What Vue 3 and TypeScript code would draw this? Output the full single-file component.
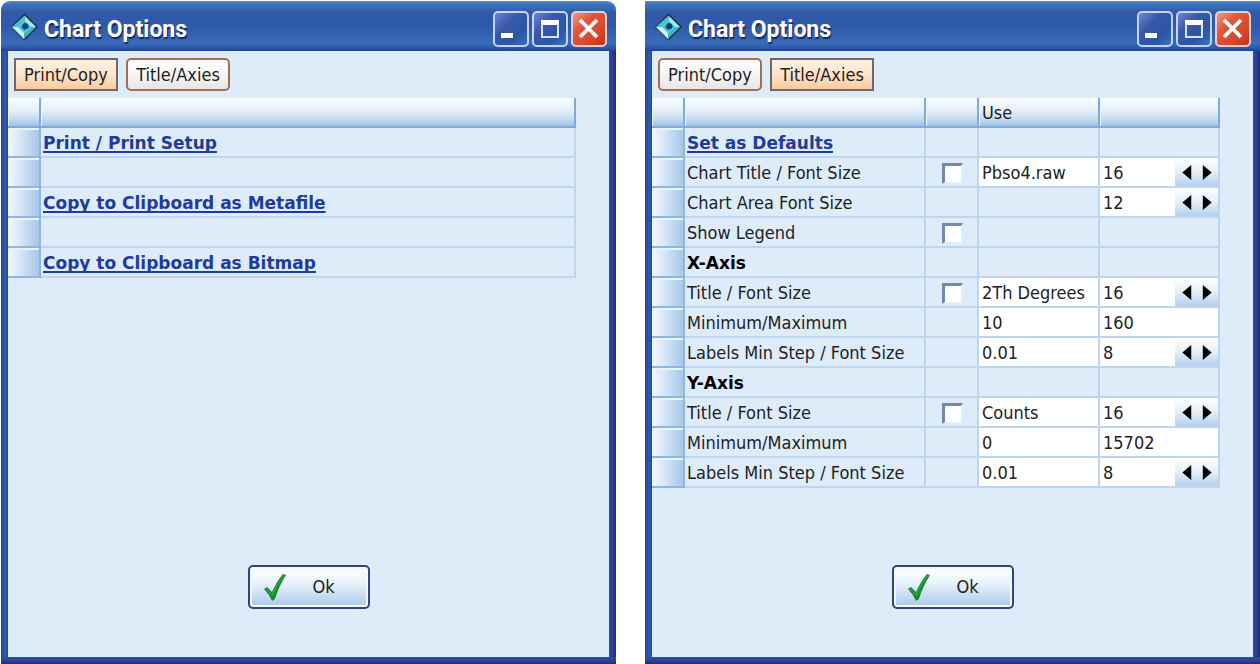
<script setup lang="ts">
import { ref, reactive } from 'vue'

interface OptionRow {
  id: string
  label: string
  kind?: 'link' | 'heading'
  check?: boolean
  use?: string
  value?: string
  spin?: boolean
}

const tabs = ['Print/Copy', 'Title/Axies']

const actions = ['Print / Print Setup', '', 'Copy to Clipboard as Metafile', '', 'Copy to Clipboard as Bitmap']

const rows = reactive<OptionRow[]>([
  { id: 'defaults', label: 'Set as Defaults', kind: 'link' },
  { id: 'chart-title', label: 'Chart Title / Font Size', check: false, use: 'Pbso4.raw', value: '16', spin: true },
  { id: 'chart-area', label: 'Chart Area Font Size', value: '12', spin: true },
  { id: 'legend', label: 'Show Legend', check: false },
  { id: 'x-axis', label: 'X-Axis', kind: 'heading' },
  { id: 'x-title', label: 'Title / Font Size', check: false, use: '2Th Degrees', value: '16', spin: true },
  { id: 'x-range', label: 'Minimum/Maximum', use: '10', value: '160' },
  { id: 'x-step', label: 'Labels Min Step / Font Size', use: '0.01', value: '8', spin: true },
  { id: 'y-axis', label: 'Y-Axis', kind: 'heading' },
  { id: 'y-title', label: 'Title / Font Size', check: false, use: 'Counts', value: '16', spin: true },
  { id: 'y-range', label: 'Minimum/Maximum', use: '0', value: '15702' },
  { id: 'y-step', label: 'Labels Min Step / Font Size', use: '0.01', value: '8', spin: true },
])

const windows = ref([{ active: 0 }, { active: 1 }])

function step(row: OptionRow, by: number) {
  row.value = String(Number(row.value) + by)
}
</script>

<template>
  <main class="desktop">
    <section v-for="(win, w) in windows" :key="w" class="window" :class="{ rounded: w === 0 }" aria-label="Chart Options">
      <header class="titlebar">
        <svg class="logo" viewBox="0 0 28 28" aria-hidden="true">
          <path d="M14 0 28 14 14 28 0 14Z" fill="#12313f" />
          <path d="M14 2 14 8 8 14 1 14Z" fill="#4fc0ce" />
          <path d="M14 2 26 14 20 14 14 8Z" fill="#a5e8ee" />
          <path d="M1 14 8 14 14 20 14 27Z" fill="#c9f6f8" />
          <path d="M26 14 20 14 14 20 14 26Z" fill="#38b6cc" />
          <path d="M14 7 21 14 14 21 7 14Z" fill="#5cc8da" />
          <path d="M14 9 19 14 14 18 10 14Z" fill="#1b7fb0" />
          <circle cx="15" cy="13" r="3" fill="#0b3f7a" />
        </svg>
        <h1>Chart Options</h1>
        <div class="controls">
          <button type="button" class="ctl" aria-label="Minimize">
            <svg viewBox="0 0 32 32"><rect x="6" y="20" width="12" height="5" fill="#fff" /></svg>
          </button>
          <button type="button" class="ctl" aria-label="Maximize">
            <svg viewBox="0 0 32 32">
              <rect x="8" y="8" width="16" height="16" fill="none" stroke="#d5e2fa" stroke-width="2" />
              <rect x="7" y="7" width="18" height="5" fill="#fff" />
            </svg>
          </button>
          <button type="button" class="ctl close" aria-label="Close">
            <svg viewBox="0 0 32 32"><path d="M7 7 24 24M24 7 7 24" stroke="#fff" stroke-width="3.8" /></svg>
          </button>
        </div>
      </header>

      <div class="client">
        <nav class="tabs" role="tablist">
          <button
            v-for="(tab, t) in tabs"
            :key="tab"
            type="button"
            role="tab"
            class="tab"
            :class="{ active: win.active === t }"
            :aria-selected="win.active === t"
            @click="win.active = t"
          >{{ tab }}</button>
        </nav>

        <div class="sheet">
          <table v-if="win.active === 0">
            <colgroup><col class="c-mark" /><col /></colgroup>
            <thead><tr><th></th><th></th></tr></thead>
            <tbody>
              <tr v-for="(action, i) in actions" :key="i">
                <td class="mark"></td>
                <td><a v-if="action" href="#">{{ action }}</a></td>
              </tr>
            </tbody>
          </table>

          <table v-else>
            <colgroup><col class="c-mark" /><col /><col class="c-check" /><col class="c-use" /><col class="c-value" /></colgroup>
            <thead><tr><th></th><th></th><th></th><th class="use">Use</th><th></th></tr></thead>
            <tbody>
              <tr v-for="row in rows" :key="row.id">
                <td class="mark"></td>
                <td>
                  <a v-if="row.kind === 'link'" href="#">{{ row.label }}</a>
                  <strong v-else-if="row.kind === 'heading'">{{ row.label }}</strong>
                  <label v-else :for="row.value ? row.id + '-value' : row.id + '-check'">{{ row.label }}</label>
                </td>
                <td class="check">
                  <input v-if="row.check !== undefined" :id="row.id + '-check'" v-model="row.check" type="checkbox" :aria-label="'Use ' + row.label" />
                </td>
                <td :class="{ field: row.use !== undefined }">
                  <input v-if="row.use !== undefined" v-model="row.use" type="text" :aria-label="row.label" />
                </td>
                <td :class="{ field: row.value !== undefined }">
                  <div v-if="row.value !== undefined" class="value">
                    <input :id="row.id + '-value'" v-model="row.value" type="text" />
                    <div v-if="row.spin" class="spin">
                      <button type="button" aria-label="Decrease" @click="step(row, -1)">
                        <svg viewBox="0 0 10 16"><path d="M9.500 0V16L0 8Z" /></svg>
                      </button>
                      <button type="button" aria-label="Increase" @click="step(row, 1)">
                        <svg viewBox="0 0 10 16"><path d="M.5 0V16L10 8Z" /></svg>
                      </button>
                    </div>
                  </div>
                </td>
              </tr>
            </tbody>
          </table>
        </div>

        <footer>
          <button type="button" class="ok">
            <svg viewBox="0 0 24 28" aria-hidden="true">
              <path d="M1 16 4 14 9 19Q14 8 20 1L23 2Q16 13 12 26L9 28Q6 21 1 16Z" fill="#178a35" />
              <path d="M3 16 9 22Q14 11 21 2" fill="none" stroke="#3db54a" stroke-width="1" />
            </svg>
            <span>Ok</span>
          </button>
        </footer>
      </div>
    </section>
  </main>
</template>

<style>
body {
  margin: 0;
  background: #fff;
}
</style>

<style scoped>
* {
  box-sizing: border-box;
}

.desktop {
  display: grid;
  grid-template-columns: 1fr 1fr;
  gap: 29px;
  min-height: 100vh;
  padding: 1px 0 0 1px;
  font-family: "DejaVu Sans Condensed", "DejaVu Sans", "Noto Sans", sans-serif;
  font-size: 18px;
  line-height: 24px;
  color: #222;
}

button,
input {
  font: inherit;
  color: inherit;
  margin: 0;
  padding: 0;
}

.window {
  display: flex;
  flex-direction: column;
  min-width: 0;
  padding: 0 7px 7px;
  background:
    linear-gradient(180deg, #4a8cca 0, #3a72ba 4px, #3059a8 12px, #2f5aaa 26px, #3a6cb8 42px, #2d58a8 47px, #1f3f92 50px, transparent 50px),
    linear-gradient(0deg, #2a2478 0, #27419a 3px, #2a52a8 7px, transparent 7px),
    linear-gradient(90deg, #2547a0 0, #2c5cb0 5px, #20449c 7px, #2a52a8 50%, #2550a8 calc(100% - 7px), #2a3a96 calc(100% - 3px), #2a2478 100%);
}

.rounded {
  border-radius: 9px 9px 0 0;
}

.titlebar {
  display: flex;
  align-items: center;
  height: 50px;
  padding: 6px 2px 0 3px;
}

.logo {
  width: 27px;
  height: 28px;
  margin-bottom: 4px;
}

h1 {
  flex: 1;
  margin: 0 0 0 6px;
  padding-top: 2px;
  font-family: Roboto, "Noto Sans", sans-serif;
  font-size: 23px;
  font-weight: 700;
  line-height: 28px;
  color: #fff;
  text-shadow: 1px 2px 1px #14256b;
}

.controls {
  display: flex;
  gap: 3px;
}

.ctl {
  width: 36px;
  height: 36px;
  border: 2px solid #c3d3f2;
  border-radius: 5px;
  background: linear-gradient(135deg, #7184cf 0, #3a58ac 35%, #2b55a8 70%, #3a72be 100%);
}

.ctl svg {
  display: block;
  width: 32px;
  height: 32px;
}

.close {
  border-color: #e9cfd2;
  background: linear-gradient(135deg, #ee9b87 0, #e0563a 35%, #d9472a 70%, #c0301a 100%);
}

.client {
  display: flex;
  flex: 1;
  flex-direction: column;
  background: #deecf9;
}

.tabs {
  display: flex;
  gap: 8px;
  padding: 7px 6px;
}

.tab {
  width: 104px;
  height: 33px;
  border: 2px solid #a0714f;
  border-radius: 5px;
  background: linear-gradient(#fff, #f4f3f3 60%, #e6e4e6);
}

.tab.active {
  border-color: #70696a;
  border-radius: 0;
  background: linear-gradient(#fff3e6, #fde3cb 50%, #fbcb9c);
}

.sheet {
  padding-right: 33px;
}

table {
  width: 100%;
  table-layout: fixed;
  border-spacing: 0;
}

.c-mark { width: 33px; }
.c-check { width: 53px; }
.c-use { width: 121px; }
.c-value { width: 120px; }

th,
td {
  height: 30px;
  padding: 2px 0 0 2px;
  border-right: 2px solid #bdd5ef;
  border-bottom: 2px solid #bdd5ef;
  text-align: left;
  white-space: nowrap;
  font-weight: 400;
}

th {
  border-color: #7ea9da;
  background: linear-gradient(#fbfdff, #e3f0f9 45%, #c5dbf0 75%, #9fc1e5);
  box-shadow: inset 1px 0 #edf6fd;
}

.use {
  padding-left: 3px;
}

.mark {
  border-color: #8fb6e2;
  background: linear-gradient(90deg, #f1f8fe 0, #dbe9f7 35%, #a6c6e9 100%);
  box-shadow: inset 0 2px #e9f4fd;
}

a,
strong {
  font-family: "DejaVu Sans", Verdana, sans-serif;
  font-size: 17px;
  font-weight: 700;
}

a {
  color: #1f3b9b;
  text-decoration-thickness: 2px;
  text-underline-offset: 2px;
  text-decoration-skip-ink: none;
}

strong {
  color: #000;
}

.check {
  padding: 2px 0 0 2px;
  text-align: center;
}

input[type="checkbox"] {
  display: block;
  width: 21px;
  height: 21px;
  margin: 0 auto;
  appearance: none;
  border: solid;
  border-width: 3px 2px 2px 3px;
  border-color: #7189ad #e3eefa #e3eefa #7189ad;
  background: #fff;
}

input[type="checkbox"]:checked {
  background: #1f3b9b;
}

.field {
  padding: 0;
  background: #fff;
}

input[type="text"] {
  display: block;
  width: 100%;
  min-width: 0;
  height: 28px;
  padding: 1px 3px 0;
  border: 0;
  background: transparent;
}

.value {
  display: flex;
}

.spin {
  display: flex;
  flex: none;
  justify-content: center;
  gap: 4px;
  width: 43px;
  background: linear-gradient(#fff, #e3eff9 50%, #b3d0ee);
}

.spin button {
  width: 16px;
  border: 0;
  background: none;
}

.spin svg {
  display: block;
  width: 10px;
  height: 15px;
  margin: 0 auto;
  fill: #000;
}

footer {
  display: flex;
  justify-content: center;
  margin-top: auto;
  padding: 24px 0 48px;
}

.ok {
  display: flex;
  align-items: center;
  gap: 26px;
  width: 122px;
  height: 44px;
  padding-left: 13px;
  border: 2px solid #3c3f7e;
  border-radius: 5px;
  background: linear-gradient(#fff, #e9f3fb 40%, #a9c9ea);
  box-shadow: inset 0 0 0 2px #f2f8fd;
}

.ok svg {
  width: 24px;
  height: 28px;
}
</style>
